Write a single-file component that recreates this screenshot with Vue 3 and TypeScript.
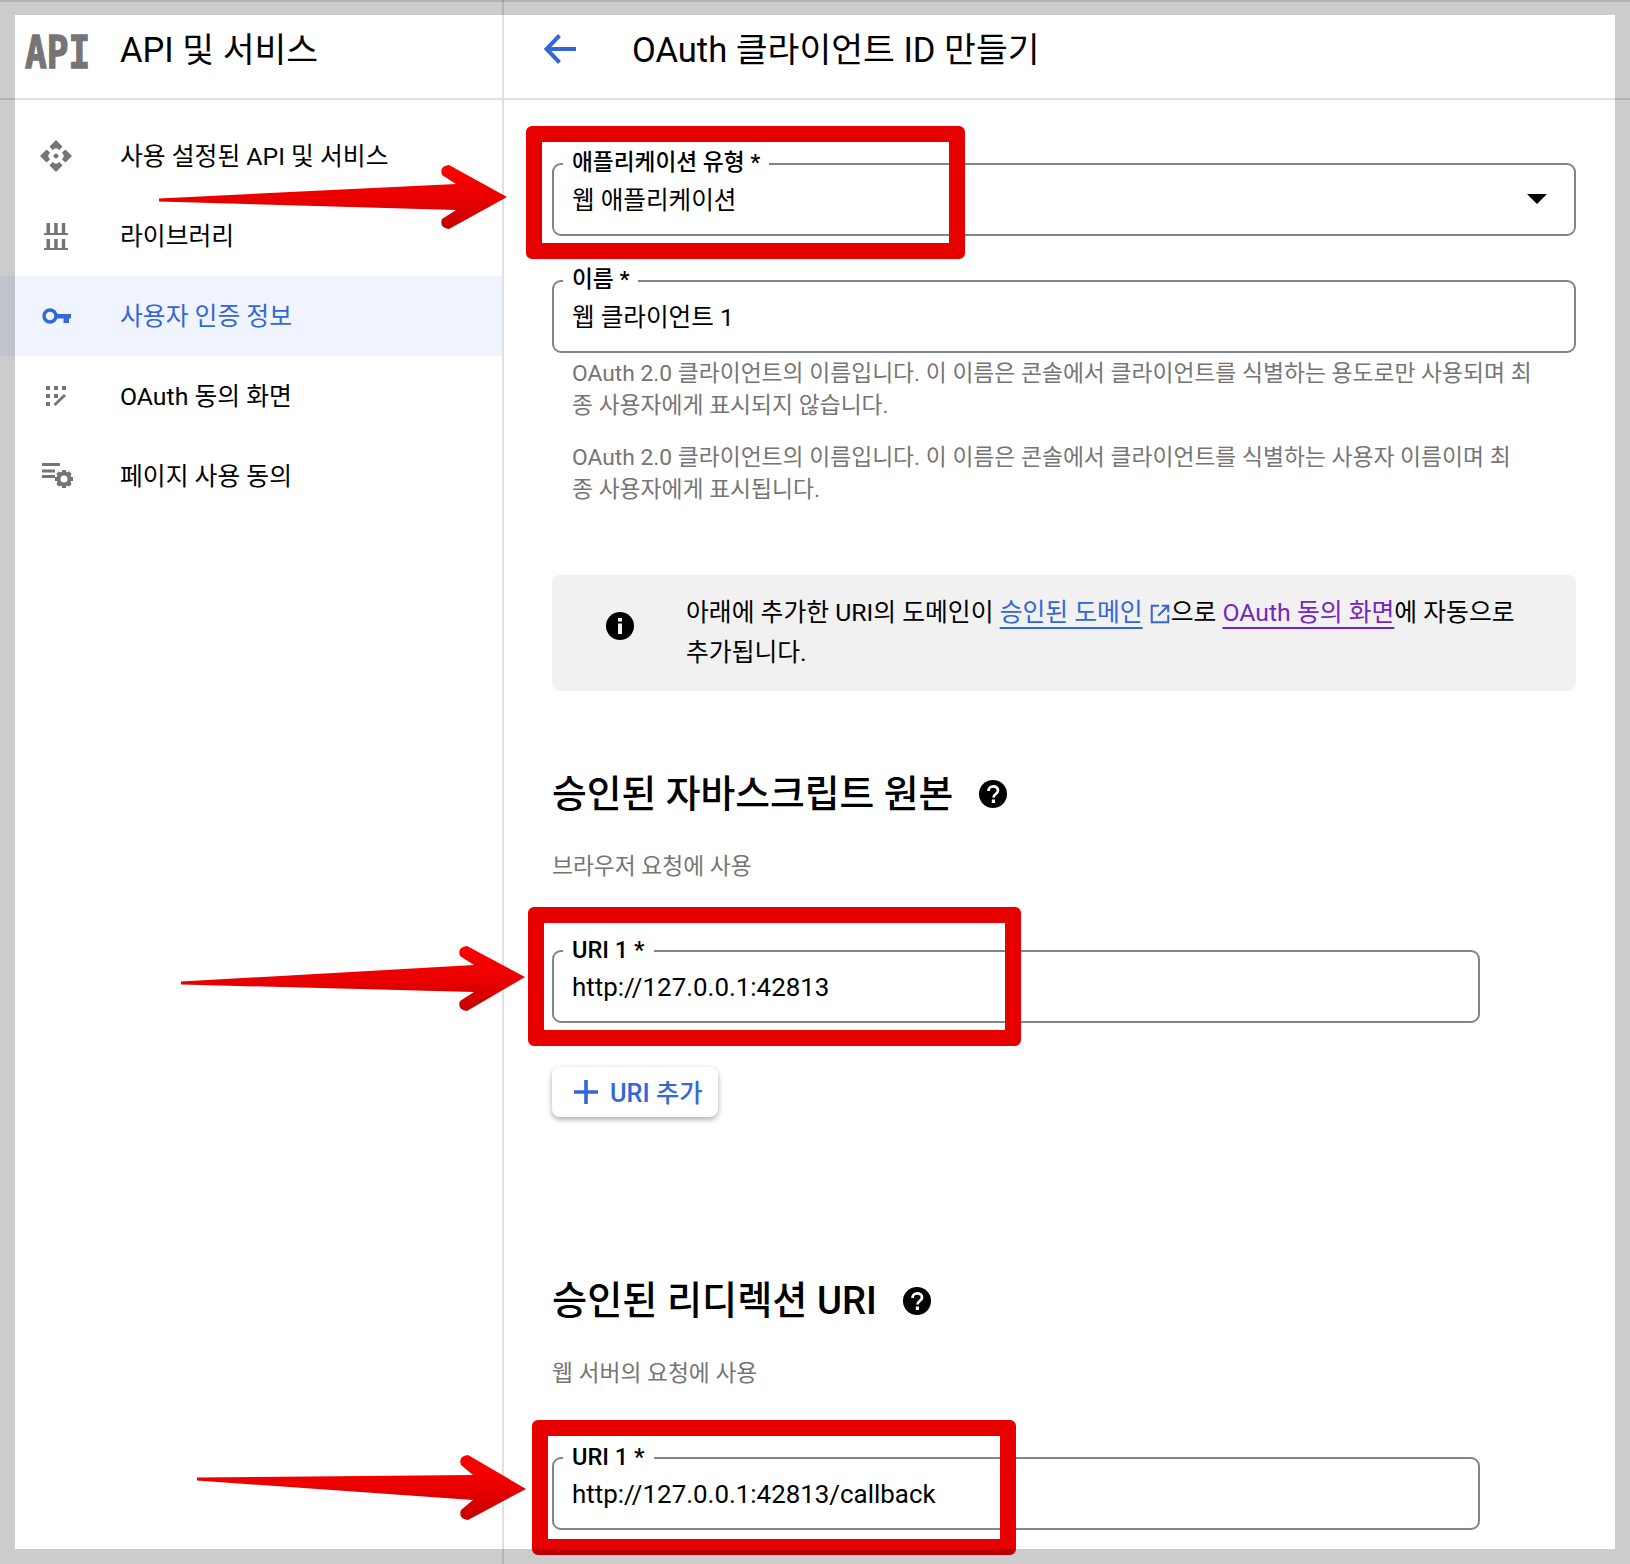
<script setup lang="ts">
interface NavItem {
  label: string;
  icon: string;
  active?: boolean;
}

const navItems: NavItem[] = [
  { label: '사용 설정된 API 및 서비스', icon: 'dashboard' },
  { label: '라이브러리', icon: 'library' },
  { label: '사용자 인증 정보', icon: 'key', active: true },
  { label: 'OAuth 동의 화면', icon: 'consent' },
  { label: '페이지 사용 동의', icon: 'terms' },
];

// rough shape of the hand drawn arrows, in page coordinates
function arrowPath(tail: number[], top: number[], barbTop: number[], tip: number[], barbBottom: number[], bottom: number[]) {
  const [tx, ty] = tail;
  return [
    `M${tx} ${ty - 1.5}`,
    `L${top[0]} ${top[1]}`,
    `L${barbTop[0] - 6} ${barbTop[1] + 10}`,
    `Q${barbTop[0] - 9} ${barbTop[1] + 1} ${barbTop[0] + 1} ${barbTop[1]}`,
    `L${tip[0]} ${tip[1]}`,
    `L${barbBottom[0] + 1} ${barbBottom[1]}`,
    `Q${barbBottom[0] - 9} ${barbBottom[1] - 1} ${barbBottom[0] - 6} ${barbBottom[1] - 10}`,
    `L${bottom[0]} ${bottom[1]}`,
    `L${tx} ${ty + 1.5}`,
    'Z',
  ].join(' ');
}

const arrows = [
  arrowPath([159, 200], [456, 184], [448, 165], [507, 197], [448, 229], [456, 210]),
  arrowPath([181, 983], [474, 965], [466, 946], [525, 977], [466, 1011], [474, 992]),
  arrowPath([197, 1479], [473, 1475], [467, 1455], [526, 1489], [467, 1520], [473, 1500]),
];
</script>

<template>
  <div class="page">
    <aside class="sidebar">
      <div class="sidebar__head">
        <span class="api-logo"><span>API</span></span>
        <h1 class="sidebar__title">API 및 서비스</h1>
      </div>
      <nav class="nav">
        <a
          v-for="item in navItems"
          :key="item.label"
          class="nav__item"
          :class="{ 'nav__item--active': item.active }"
        >
          <span class="nav__icon">
            <svg v-if="item.icon === 'dashboard'" width="32" height="32" viewBox="-16 -16 32 32" fill="#757575">
              <path d="M0-16 6.5-9.5 3.5-6 0-8-3.5-6-6.5-9.5Z" />
              <path d="M0-16 6.5-9.5 3.5-6 0-8-3.5-6-6.5-9.5Z" transform="rotate(90)" />
              <path d="M0-16 6.5-9.5 3.5-6 0-8-3.5-6-6.5-9.5Z" transform="rotate(180)" />
              <path d="M0-16 6.5-9.5 3.5-6 0-8-3.5-6-6.5-9.5Z" transform="rotate(270)" />
              <path d="M0-3 3 0 0 3-3 0Z" />
            </svg>
            <svg v-else-if="item.icon === 'library'" class="icon-library" width="24" height="28" viewBox="0 0 24 28" fill="#757575">
              <path d="M2.5 0H6V10H2.5ZM10.2 0H13.7V10H10.2ZM17.8 0H21.2V10H17.8ZM0 10H24V12H0ZM2.5 16H6V25H2.5ZM10.2 16H13.7V25H10.2ZM17.8 16H21.2V25H17.8ZM0 25H24V27H0Z" />
            </svg>
            <svg v-else-if="item.icon === 'key'" class="icon-key" width="30" height="18" viewBox="0 0 30 18">
              <circle cx="8" cy="8" r="6" fill="none" stroke="#3367d6" stroke-width="3.4" />
              <path d="M13 6H29V10.5H27V15H21.5V10.5H13Z" fill="#3367d6" />
            </svg>
            <svg v-else-if="item.icon === 'consent'" width="24" height="24" viewBox="0 0 24 24" fill="#757575">
              <path d="M2 2H6V6H2ZM10 2H14V6H10ZM18 2H22V6H18ZM2 10H6V14H2ZM10 10H14V14H10ZM2 18H6V22H2Z" />
              <path d="M10.5 21 21 11" stroke="#757575" stroke-width="3" />
            </svg>
            <svg v-else class="icon-terms" width="32" height="26" viewBox="0 0 32 26" fill="#757575">
              <path d="M0 0H18V3H0ZM0 6.5H13V9.5H0ZM0 12H13V15H0Z" />
              <circle cx="22" cy="16" r="5.5" fill="none" stroke="#757575" stroke-width="4" />
              <path d="M20 7H24V11H20ZM20 21H24V25H20ZM13 14H17V18H13ZM27 14H31V18H27Z" />
              <path d="M20 7H24V11H20ZM20 21H24V25H20ZM13 14H17V18H13ZM27 14H31V18H27Z" transform="rotate(45 22 16)" />
            </svg>
          </span>
          <span class="nav__label">{{ item.label }}</span>
        </a>
      </nav>
    </aside>

    <main class="main">
      <header class="main__head">
        <svg class="back" width="32" height="30" viewBox="0 0 32 30" fill="none" stroke="#3367d6" stroke-width="4">
          <path d="M32 15H3" />
          <path d="M15.5 1.5 2.5 15 15.5 28.5" />
        </svg>
        <h2 class="main__title">OAuth 클라이언트 ID 만들기</h2>
      </header>

      <div class="content">
        <div class="field">
          <label class="field__label">애플리케이션 유형 *</label>
          <span class="field__value">웹 애플리케이션</span>
          <span class="caret"></span>
        </div>

        <div class="field field--name">
          <label class="field__label">이름 *</label>
          <span class="field__value">웹 클라이언트 1</span>
        </div>

        <div class="helper">
          <p>OAuth 2.0 클라이언트의 이름입니다. 이 이름은 콘솔에서 클라이언트를 식별하는 용도로만 사용되며 최<br />종 사용자에게 표시되지 않습니다.</p>
          <p>OAuth 2.0 클라이언트의 이름입니다. 이 이름은 콘솔에서 클라이언트를 식별하는 사용자 이름이며 최<br />종 사용자에게 표시됩니다.</p>
        </div>

        <div class="notice">
          <svg class="notice__icon" width="28" height="28" viewBox="0 0 28 28">
            <circle cx="14" cy="14" r="14" fill="#000" />
            <path d="M12 11.5H16V22H12ZM12 6H16V9.5H12Z" fill="#f1f1f1" />
          </svg>
          <p>
            아래에 추가한 URI의 도메인이
            <a class="link">승인된 도메인</a><svg class="ext" width="22" height="22" viewBox="0 0 24 24" fill="none" stroke="#3367d6" stroke-width="2.2">
              <path d="M11 3H3V21H21V13" />
              <path d="M14 3H21V10M21 3 10 14" />
            </svg>으로 <a class="link link--visited">OAuth 동의 화면</a>에 자동으로<br />추가됩니다.
          </p>
        </div>

        <section class="origin">
          <h3 class="section-title">
            승인된 자바스크립트 원본
            <svg width="28" height="28" viewBox="0 0 28 28">
              <circle cx="14" cy="14" r="14" fill="#000" />
              <path d="M9.5 11c0-6 9.5-6 9.5-.5 0 3.5-4.5 3.5-4.5 7" fill="none" stroke="#fff" stroke-width="2.8" />
              <path d="M12.8 19.5H16V23H12.8Z" fill="#fff" />
            </svg>
          </h3>
          <p class="section-sub">브라우저 요청에 사용</p>
          <div class="field field--uri">
            <label class="field__label">URI 1 *</label>
            <span>http://127.0.0.1:42813</span>
          </div>
          <button class="add-btn" type="button">
            <svg width="24" height="24" viewBox="0 0 24 24" fill="#3367d6">
              <path d="M10.2 0H13.8V10.2H24V13.8H13.8V24H10.2V13.8H0V10.2H10.2Z" />
            </svg>
            <span class="add-btn__label">URI 추가</span>
          </button>
        </section>

        <section class="redirect">
          <h3 class="section-title">
            승인된 리디렉션 URI
            <svg width="28" height="28" viewBox="0 0 28 28">
              <circle cx="14" cy="14" r="14" fill="#000" />
              <path d="M9.5 11c0-6 9.5-6 9.5-.5 0 3.5-4.5 3.5-4.5 7" fill="none" stroke="#fff" stroke-width="2.8" />
              <path d="M12.8 19.5H16V23H12.8Z" fill="#fff" />
            </svg>
          </h3>
          <p class="section-sub">웹 서버의 요청에 사용</p>
          <div class="field field--uri">
            <label class="field__label">URI 1 *</label>
            <span>http://127.0.0.1:42813/callback</span>
          </div>
        </section>
      </div>
    </main>

    <!-- annotations drawn on top of the screenshot -->
    <div class="mark mark--1"></div>
    <div class="mark mark--2"></div>
    <div class="mark mark--3"></div>
    <svg class="arrows" width="1630" height="1564" viewBox="0 0 1630 1564">
      <defs>
        <linearGradient id="arrow-fill" x1="0" y1="0" x2="0" y2="1">
          <stop offset="0" stop-color="#ff0000" />
          <stop offset="0.55" stop-color="#e80000" />
          <stop offset="1" stop-color="#c40000" />
        </linearGradient>
      </defs>
      <path v-for="(d, i) in arrows" :key="i" :d="d" fill="url(#arrow-fill)" />
    </svg>
    <div class="frame"></div>
  </div>
</template>

<style>
html,
body {
  margin: 0;
  background: #fff;
}
</style>

<style scoped>
.page {
  position: relative;
  width: 1630px;
  height: 1564px;
  overflow: hidden;
  display: flex;
  background: #fff;
  color: #000;
  font-family: Roboto, "Noto Sans CJK KR", sans-serif;
  font-size: 24.6px;
}

.sidebar {
  width: 504px;
  flex: none;
  box-sizing: border-box;
  border-right: 2px solid #e0e0e0;
}

.sidebar__head,
.main__head {
  height: 100px;
  box-sizing: border-box;
  border-bottom: 2px solid #e0e0e0;
  display: flex;
  align-items: center;
}

.api-logo {
  width: 120px;
  flex: none;
  padding: 8px 0 0 25px;
  box-sizing: border-box;
  color: #757575;
  font-family: "DejaVu Sans Mono", monospace;
  font-weight: 700;
  font-size: 44px;
  line-height: 1;
  -webkit-text-stroke: 1.4px #757575;
}

.api-logo span {
  display: inline-block;
  transform: scaleX(0.82);
  transform-origin: left center;
}

.sidebar__title,
.main__title {
  margin: 0;
  padding-bottom: 4px;
  font-size: 34.6px;
  font-weight: 400;
}

.nav {
  padding-top: 16px;
}

.nav__item {
  height: 80px;
  display: flex;
  align-items: center;
  font-size: 24.8px;
}

.nav__label {
  padding-bottom: 4px;
}

.nav__item--active {
  background: #f0f4fe;
  color: #3367d6;
}

.nav__icon {
  width: 120px;
  flex: none;
  padding-right: 8px;
  box-sizing: border-box;
  display: flex;
  justify-content: center;
}

.icon-library {
  margin-top: 2px;
}

.icon-key {
  margin: 2px 0 0 2px;
}

.icon-terms {
  margin-left: 3px;
}

.main {
  flex: 1;
  min-width: 0;
}

.back {
  margin-left: 40px;
  margin-right: 56px;
  flex: none;
}

.content {
  padding: 63px 54px 0 48px;
}

.field {
  position: relative;
  height: 73px;
  box-sizing: border-box;
  border: 2px solid #80868b;
  border-radius: 9px;
  padding: 0 18px;
  display: flex;
  align-items: center;
}

.field__value {
  padding-bottom: 4px;
}

.field--name {
  margin-top: 44px;
}

.field--uri {
  width: 928px;
  font-size: 25.9px;
}

.field__label {
  position: absolute;
  left: 9px;
  top: -15px;
  padding: 0 9px;
  background: #fff;
  font-size: 22.7px;
  line-height: 26px;
  font-weight: 500;
}

.field--uri .field__label {
  font-size: 23.6px;
}

.caret {
  position: absolute;
  right: 27px;
  top: 29px;
  width: 0;
  height: 0;
  border-left: 10px solid transparent;
  border-right: 10px solid transparent;
  border-top: 10px solid #000;
}

.helper {
  margin-top: 5px;
  padding: 0 17px 0 20px;
  color: #757575;
  font-size: 22.8px;
  line-height: 32px;
}

.helper p {
  margin: 0 0 20px;
}

.notice {
  margin-top: 69px;
  height: 116px;
  box-sizing: border-box;
  padding: 18px 30px 18px 54px;
  background: #f1f1f1;
  border-radius: 8px;
  display: flex;
  align-items: flex-start;
  gap: 52px;
  font-size: 24.8px;
  line-height: 40px;
  white-space: nowrap;
}

.notice p {
  margin: 0;
}

.notice__icon {
  flex: none;
  margin-top: 19px;
}

.link {
  color: #3367d6;
  text-decoration: underline;
  text-decoration-thickness: 2px;
  text-underline-offset: 6px;
}

.link--visited {
  color: #7627bb;
}

.ext {
  vertical-align: -4px;
  margin-left: 6px;
}

.origin {
  margin-top: 79px;
}

.redirect {
  margin-top: 160px;
}

.redirect .section-title {
  font-size: 38.2px;
}

.section-title {
  margin: 0;
  height: 48px;
  display: flex;
  align-items: center;
  gap: 26px;
  font-size: 37.8px;
  line-height: 48px;
  font-weight: 500;
}

.section-sub {
  margin: 33px 0 67px;
  color: #757575;
  font-size: 22.75px;
  line-height: 32px;
}

.add-btn {
  margin-top: 44px;
  width: 166px;
  height: 50px;
  border: 0;
  border-radius: 8px;
  background: #fff;
  box-shadow: 0 3px 5px rgba(60, 64, 67, 0.32), 0 1px 6px rgba(60, 64, 67, 0.12);
  color: #3367d6;
  font: 500 25.3px Roboto, "Noto Sans CJK KR", sans-serif;
  display: flex;
  align-items: center;
  gap: 12px;
  padding: 0 0 0 22px;
}

.add-btn__label {
  padding-bottom: 2px;
}

.mark {
  position: absolute;
  box-sizing: border-box;
  border: 16px solid #e60000;
  border-radius: 6px;
}

.mark--1 {
  left: 526px;
  top: 126px;
  width: 439px;
  height: 133px;
}

.mark--2 {
  left: 528px;
  top: 907px;
  width: 493px;
  height: 139px;
}

.mark--3 {
  left: 532px;
  top: 1420px;
  width: 484px;
  height: 135px;
}

.arrows {
  position: absolute;
  left: 0;
  top: 0;
  pointer-events: none;
}

.frame {
  position: absolute;
  inset: 0;
  box-sizing: border-box;
  border: 15px solid rgba(0, 0, 0, 0.2);
  pointer-events: none;
}

.frame::before {
  content: "";
  position: absolute;
  left: -15px;
  right: -15px;
  top: -15px;
  height: 2px;
  background: rgba(0, 0, 0, 0.12);
}
</style>
